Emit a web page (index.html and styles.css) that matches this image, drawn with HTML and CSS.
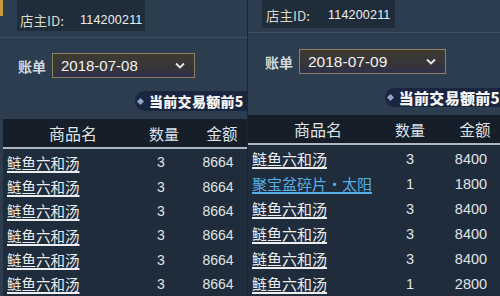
FILE: index.html
```html
<!DOCTYPE html>
<html lang="zh-CN">
<head>
<meta charset="utf-8">
<title>账单</title>
<link rel="stylesheet" href="styles.css">
</head>
<body>
<div class="panel p1">
  <div class="top">
    <div class="tab"></div>
    <div class="info"><span class="lbl">店主ID:</span><span class="num">114200211</span></div>
  </div>
  <div class="bill">
    <span class="bill-lbl">账单</span>
    <div class="select"><span class="date">2018-07-08</span>
      <svg class="chev" width="10" height="7" viewBox="0 0 10 7"><path d="M1 1.5 L5 5.5 L9 1.5" fill="none" stroke="#e8e8e8" stroke-width="1.8"/></svg>
    </div>
  </div>
  <div class="rank"><div class="pill"><span class="dia"></span><span class="pill-t">当前交易额前5</span></div></div>
  <div class="table">
    <div class="head"><span class="h-name">商品名</span><span class="h-qty">数量</span><span class="h-amt">金额</span></div>
    <div class="rows">
      <div class="row"><span class="name">鲢鱼六和汤</span><span class="qty">3</span><span class="amt">8664</span></div>
      <div class="row"><span class="name">鲢鱼六和汤</span><span class="qty">3</span><span class="amt">8664</span></div>
      <div class="row"><span class="name">鲢鱼六和汤</span><span class="qty">3</span><span class="amt">8664</span></div>
      <div class="row"><span class="name">鲢鱼六和汤</span><span class="qty">3</span><span class="amt">8664</span></div>
      <div class="row"><span class="name">鲢鱼六和汤</span><span class="qty">3</span><span class="amt">8664</span></div>
      <div class="row"><span class="name">鲢鱼六和汤</span><span class="qty">3</span><span class="amt">8664</span></div>
    </div>
  </div>
</div>
<div class="panel p2">
  <div class="top">
    <div class="info"><span class="lbl">店主ID:</span><span class="num">114200211</span></div>
  </div>
  <div class="bill">
    <span class="bill-lbl">账单</span>
    <div class="select"><span class="date">2018-07-09</span>
      <svg class="chev" width="10" height="7" viewBox="0 0 10 7"><path d="M1 1.5 L5 5.5 L9 1.5" fill="none" stroke="#e8e8e8" stroke-width="1.8"/></svg>
    </div>
  </div>
  <div class="rank"><div class="pill"><span class="dia"></span><span class="pill-t">当前交易额前5</span></div></div>
  <div class="table">
    <div class="head"><span class="h-name">商品名</span><span class="h-qty">数量</span><span class="h-amt">金额</span></div>
    <div class="rows">
      <div class="row"><span class="name">鲢鱼六和汤</span><span class="qty">3</span><span class="amt">8400</span></div>
      <div class="row"><span class="name blue">聚宝盆碎片·太阳</span><span class="qty">1</span><span class="amt">1800</span></div>
      <div class="row"><span class="name">鲢鱼六和汤</span><span class="qty">3</span><span class="amt">8400</span></div>
      <div class="row"><span class="name">鲢鱼六和汤</span><span class="qty">3</span><span class="amt">8400</span></div>
      <div class="row"><span class="name">鲢鱼六和汤</span><span class="qty">3</span><span class="amt">8400</span></div>
      <div class="row"><span class="name">鲢鱼六和汤</span><span class="qty">1</span><span class="amt">2800</span></div>
    </div>
  </div>
</div>
</body>
</html>
```

FILE: styles.css
```css
html, body {
  margin: 0;
  padding: 0;
}
body {
  width: 500px;
  height: 296px;
  overflow: hidden;
  display: flex;
  background: #2c3d50;
  font-family: "Noto Sans CJK SC", "Liberation Sans", sans-serif;
  color: #e2e6ea;
}
.panel {
  display: flex;
  flex-direction: column;
  flex: none;
}
.p1 { width: 247px; }
.p2 { width: 252px; border-left: 1px solid #1a2531; }

/* top info */
.top {
  display: flex;
  align-items: flex-start;
  border-bottom: 1px solid #3c4f63;
}
.p1 .top { height: 38px; }
.p2 .top { height: 35px; }
.tab {
  width: 3px;
  height: 16px;
  background: #c99a3a;
}
.info {
  display: flex;
  align-items: center;
  background: #1f2c3a;
  box-sizing: border-box;
}
.p1 .info { margin-left: 14px; width: 128px; height: 31px; padding: 8px 0 0 3px; }
.p2 .info { margin-left: 14px; width: 133px; height: 28px; padding: 1px 0 0 4px; }
.lbl {
  flex: none;
  font-size: 13.5px;
  color: #ded8c6;
  width: 60px;
}
.p2 .lbl { width: 62px; }
.num {
  flex: none;
  font-family: "Liberation Sans", sans-serif;
  font-size: 12.5px;
  color: #eef0f2;
  letter-spacing: 0.2px;
}

/* bill row */
.bill {
  display: flex;
  align-items: center;
  height: 25px;
}
.p1 .bill { margin-top: 15px; padding-left: 18px; }
.p2 .bill { margin-top: 16px; padding-left: 17px; }
.bill-lbl {
  font-size: 14px;
  font-weight: 700;
  color: #d4d9de;
}
.select {
  display: flex;
  align-items: center;
  justify-content: space-between;
  box-sizing: border-box;
  height: 25px;
  border: 1.5px solid #8f8160;
  background: linear-gradient(#3e3b32, #35343a 70%, #2e3050);
  padding: 0 9px 0 8px;
}
.p1 .select { margin-left: 6px; width: 143px; }
.p2 .select { margin-left: 6px; width: 147px; }
.date {
  font-family: "Liberation Sans", sans-serif;
  font-size: 15px;
  color: #f2f2f2;
}
.p2 .date { font-size: 15.5px; }

/* rank pill */
.rank {
  display: flex;
  justify-content: flex-end;
}
.p1 .rank { margin-top: 13px; }
.p2 .rank { margin-top: 14px; }
.pill {
  display: flex;
  align-items: center;
  background: #1a2540;
  border-radius: 10px 0 0 10px;
  height: 20px;
  padding-left: 3px;
}
.p1 .pill { width: 109px; }
.p2 .pill { width: 112px; height: 19px; }
.dia {
  width: 5px;
  height: 5px;
  background: #8fa6c8;
  transform: rotate(45deg);
  margin-right: 6px;
}
.pill-t {
  font-size: 14px;
  font-weight: 900;
  color: #f4f4f4;
  white-space: nowrap;
  letter-spacing: 0.3px;
}
.p2 .pill-t { font-size: 15px; }

/* table */
.table {
  display: flex;
  flex-direction: column;
  background: #1f2c3b;
  flex: 1;
  margin-top: 8px;
}
.p1 .table { margin-left: 3px; }
.head, .row {
  display: grid;
  align-items: center;
}
.p1 .head, .p1 .row { grid-template-columns: 130px 56px 58px; }
.p2 .head, .p2 .row { grid-template-columns: 130px 64px 58px; }
.head {
  height: 28px;
  background: #151e29;
  border-bottom: 2px solid #aeb6be;
  font-size: 15px;
  color: #dfe3e7;
  text-align: center;
}
.h-name { padding-left: 10px; font-size: 16px; }
.p1 .h-qty { padding-left: 6px; }
.h-amt { padding-left: 8px; font-size: 15.5px; }
.rows { margin-top: 1px; }
.p1 .row { height: 24.3px; }
.p2 .row { height: 25px; }
.name {
  padding-left: 4px;
  font-size: 14.5px;
  color: #eceef0;
  text-decoration: underline;
  text-decoration-thickness: 1.5px;
  text-underline-offset: 2px;
  white-space: nowrap;
}
.p2 .name { font-size: 15px; }
.name.blue { color: #5aaee6; }
.qty, .amt {
  font-family: "Liberation Sans", sans-serif;
  text-align: center;
  font-size: 14px;
  color: #e0e4e8;
}
.p2 .qty, .p2 .amt { font-size: 14.5px; }
```
